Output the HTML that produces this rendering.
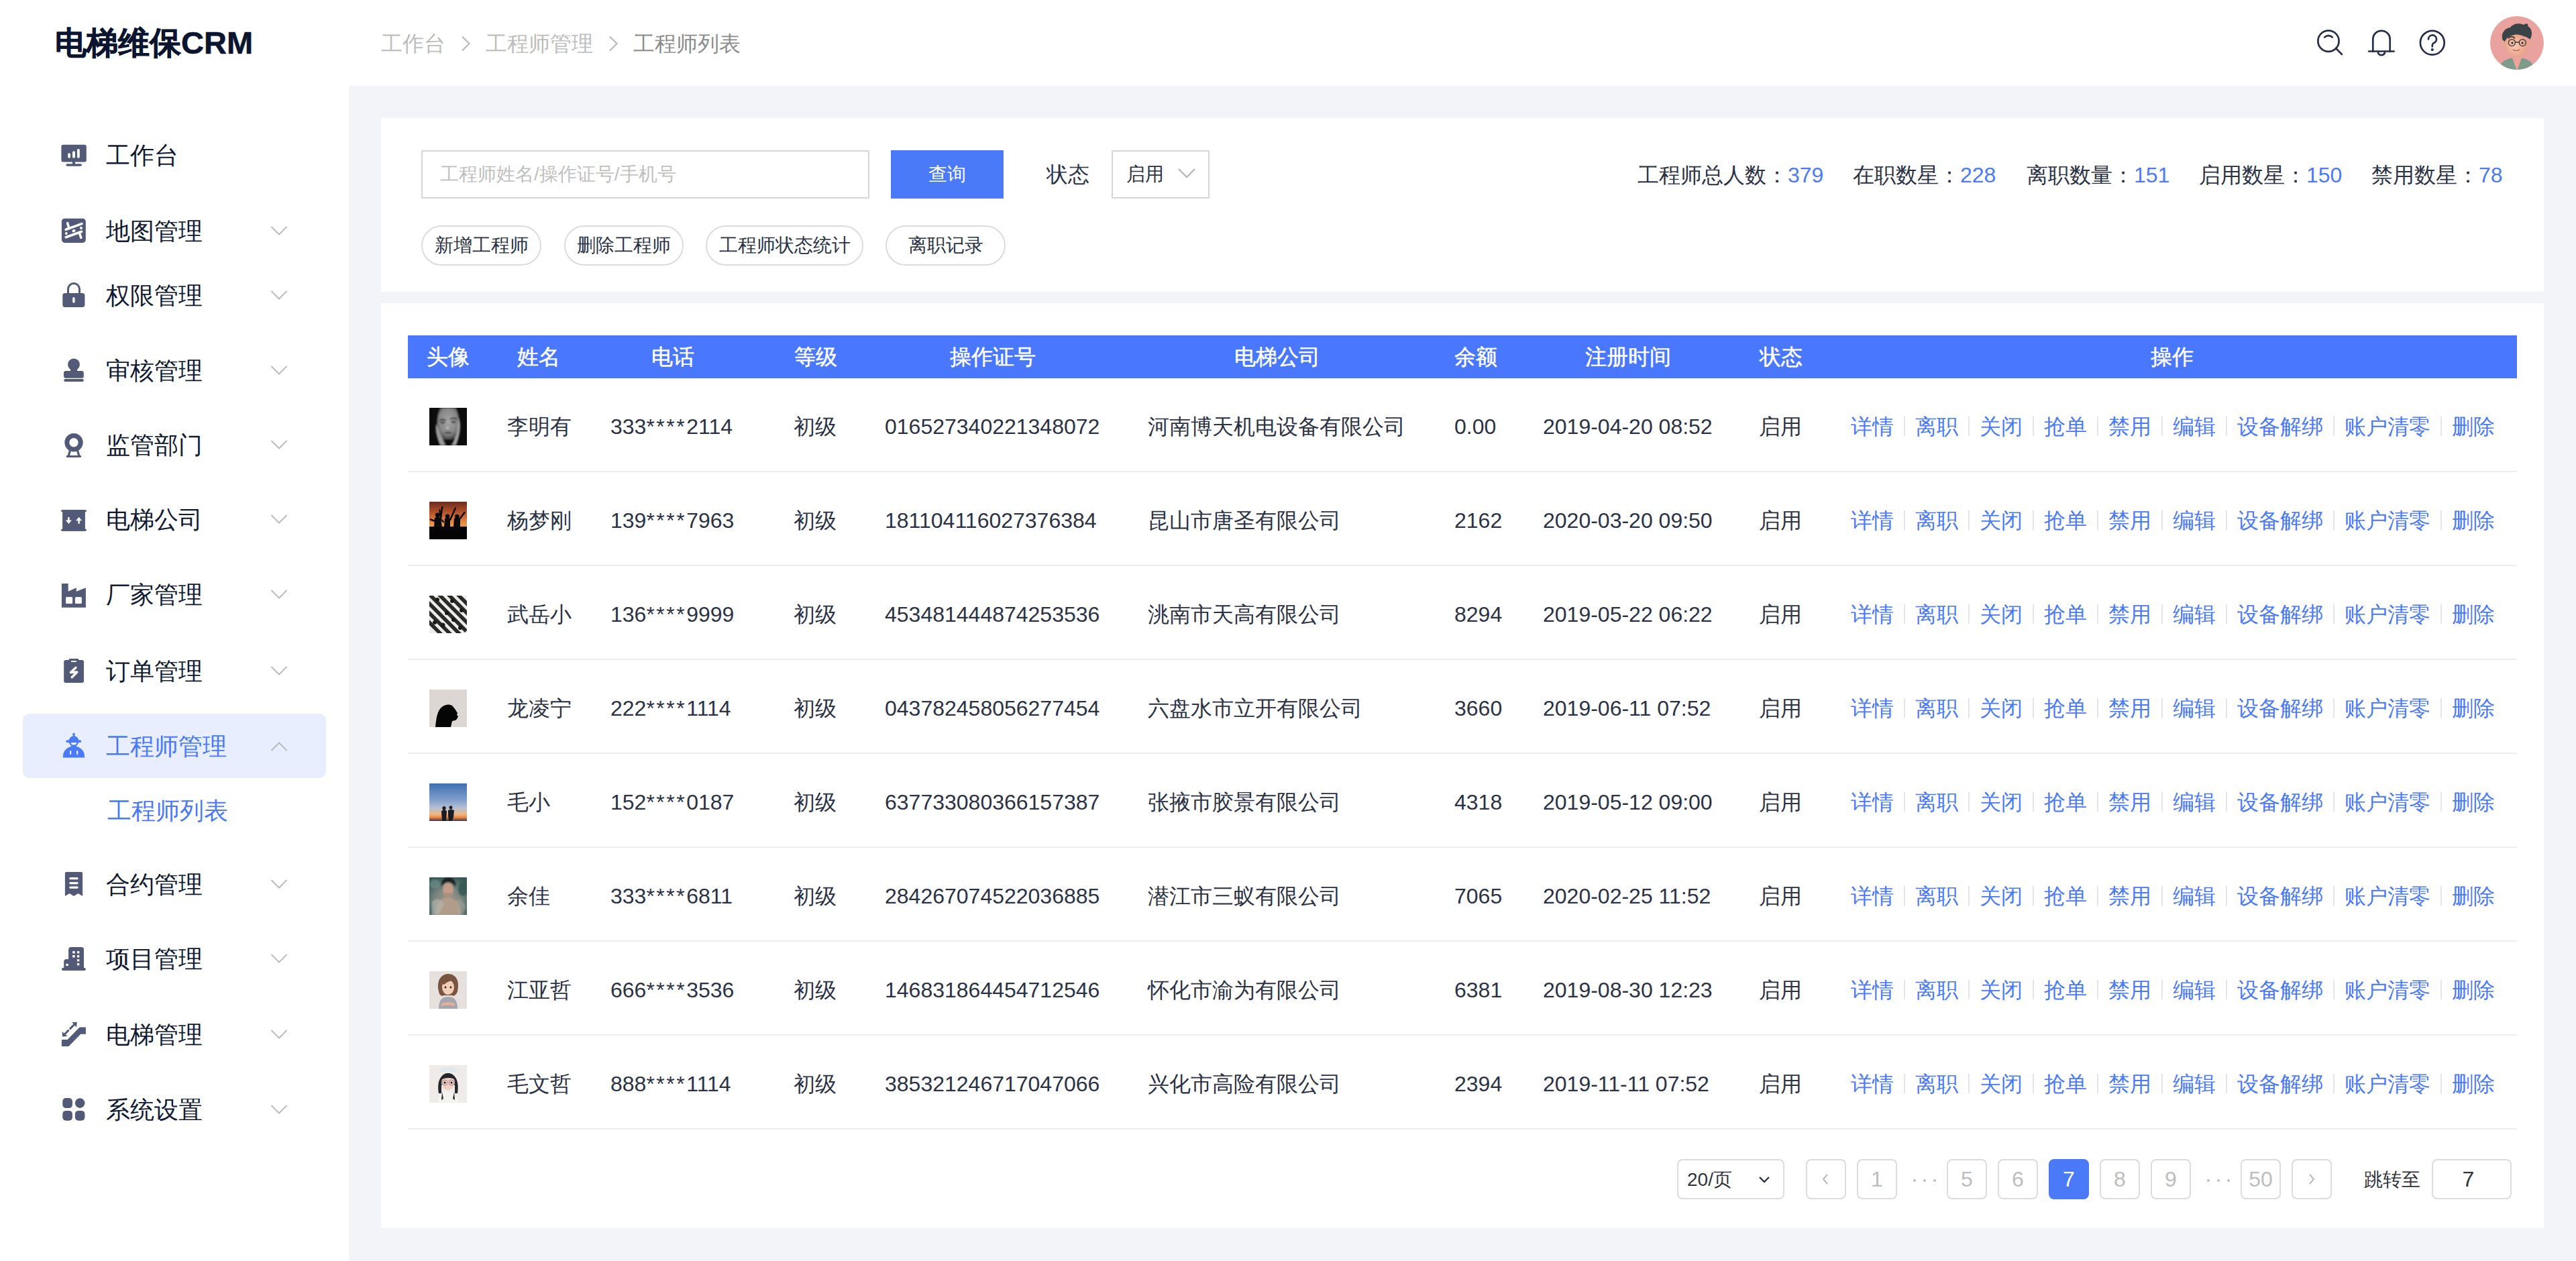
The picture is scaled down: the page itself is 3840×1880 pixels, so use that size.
<!DOCTYPE html>
<html><head><meta charset="utf-8"><title>电梯维保CRM</title>
<style>
*{box-sizing:border-box;margin:0;padding:0}
html,body{width:3840px;height:1880px;overflow:hidden;background:#fff;font-family:"Liberation Sans",sans-serif;color:#2b3245}
.abs{position:absolute;white-space:nowrap}
svg.abs{display:block}
#logo{position:absolute;left:82px;top:31px;font-size:47px;font-weight:bold;color:#0b1530;-webkit-text-stroke:0.6px #0b1530;line-height:66px;white-space:nowrap}
.crumb{font-size:32px;line-height:48px}
.mt{font-size:36px;line-height:60px;white-space:nowrap}
.t28{font-size:28px;line-height:44px}
.t32{font-size:32px;line-height:48px}
.box{border:2px solid #d6d6d6;background:#fff}
.tag{height:60px;border:2px solid #dcdcdc;border-radius:30px;font-size:28px;line-height:56px;text-align:center;color:#2b3245}
.th{height:64px;line-height:64px;font-size:32px;color:#fff;text-align:center;-webkit-text-stroke:0.5px #fff}
.td{font-size:32px;line-height:48px;color:#2b3245}
.op{color:#4a7af8}
.ast{letter-spacing:2.5px}
.av{width:56px;height:56px}
.pbox{border:2px solid #dcdcdc;border-radius:8px;background:#fff}
.pbtn{width:60px;height:60px;border:2px solid #dcdcdc;border-radius:8px;font-size:32px;line-height:56px;text-align:center;color:#bdbdbd;background:#fff}
.av0{background:radial-gradient(ellipse 40% 55% at 50% 50%,#a8a8a8 0%,#7a7a7a 45%,#2a2a2a 80%,#0c0c0c 100%)}
.av1{background:linear-gradient(180deg,#6e2d1c 0%,#c85a2a 35%,#f39a4a 62%,#f2a050 66%,#050505 67%,#000 100%)}
.av2{background:repeating-linear-gradient(45deg,#f0f0ee 0 5px,#2b2b2b 5px 10px)}
.av3{background:#dcd6d3}
.av4{background:linear-gradient(180deg,#3f74b4 0%,#7b9dcc 40%,#b9c3d6 62%,#e9b98a 82%,#f08a40 90%,#4a3a50 100%)}
.av5{background:radial-gradient(ellipse 35% 45% at 55% 55%,#b89a86 0%,#8b8070 50%,#3e6762 85%,#2c4e4c 100%)}
.av6{background:radial-gradient(ellipse 30% 40% at 50% 40%,#6b4a3a 0%,#8c6a58 60%,#e8e2de 100%)}
.av7{background:radial-gradient(ellipse 30% 45% at 50% 40%,#2a2a2a 0%,#6a6a6a 60%,#efeae6 100%)}
</style></head><body>
<div class="abs" style="left:520px;top:128px;width:3320px;height:1752px;background:#f2f4f9"></div>
<div class="abs" style="left:568px;top:176px;width:3224px;height:259px;background:#fff"></div>
<div class="abs" style="left:568px;top:452px;width:3224px;height:1379px;background:#fff"></div>
<div id="logo">电梯维保CRM</div><div class="abs crumb" style="left:568px;top:41px;color:#bdbdbd">工作台</div><svg class="abs" style="left:680px;top:50px" width="30" height="30" viewBox="0 0 30 30" ><path d="M9 4.5 L19.5 15 L9 25.5" stroke="#bdbdbd" stroke-width="2.4" fill="none"/></svg><div class="abs crumb" style="left:724px;top:41px;color:#bdbdbd">工程师管理</div><svg class="abs" style="left:900px;top:50px" width="30" height="30" viewBox="0 0 30 30" ><path d="M9 4.5 L19.5 15 L9 25.5" stroke="#bdbdbd" stroke-width="2.4" fill="none"/></svg><div class="abs crumb" style="left:944px;top:41px;color:#8c8c8c">工程师列表</div><svg class="abs" style="left:3440px;top:30px" width="220" height="70" viewBox="0 0 220 70" ><g stroke="#262e48" stroke-width="2.7" fill="none" stroke-linecap="round">
<circle cx="31" cy="31.2" r="15.6"/>
<path d="M25.2 25.4 a8.5 8.5 0 0 1 11.6 0"/>
<path d="M42 42 L51 51"/>
<path d="M97.3 47 V28.5 a12.7 12.7 0 0 1 25.4 0 V47" />
<path d="M91.2 46.5 H128.6"/>
<path d="M104.8 47 a5.2 5.2 0 0 0 10.4 0"/>
<circle cx="185.8" cy="33.7" r="17.9"/>
<path d="M180 28.5 a6 6 0 1 1 8.4 5.4 c-1.6 0.8 -2.6 2 -2.6 3.8 V39.5"/>
</g><circle cx="185.8" cy="44" r="2.1" fill="#262e48"/></svg><svg class="abs" style="left:3712px;top:24px" width="80" height="80" viewBox="0 0 80 80" ><defs><clipPath id="cb"><circle cx="40" cy="40" r="40"/></clipPath>
<radialGradient id="skin" cx="0.45" cy="0.5" r="0.6"><stop offset="0" stop-color="#f8c9ae"/><stop offset="1" stop-color="#e79c86"/></radialGradient></defs>
<g clip-path="url(#cb)">
<rect width="80" height="80" fill="#e9a29e"/>
<path d="M12 82 C14 68 24 62 40 62 C56 62 64 68 68 82Z" fill="#7d9c8c"/>
<path d="M33 62 L40 82 L47 62Z" fill="#eea498"/>
<ellipse cx="21" cy="42" rx="3" ry="4" fill="#eaa58e"/>
<ellipse cx="57" cy="42" rx="3" ry="4" fill="#eaa58e"/>
<ellipse cx="39" cy="44" rx="16.5" ry="17" fill="url(#skin)"/>
<path d="M19 36 C15 26 22 18 30 17 C34 11 44 10 50 13 C54 10 58 11 56 15 C62 18 64 26 60 34 C60 36 56 31 50 30 C46 28 40 27 36 28 C30 29 24 32 22 38Z" fill="#3a4446"/>
<path d="M27 33 C30 30 34 30 37 33" stroke="#3a2e2a" stroke-width="2" fill="none"/>
<circle cx="32.4" cy="39.6" r="5" stroke="#3a3a3a" stroke-width="1.3" fill="none"/>
<circle cx="48.3" cy="39.6" r="5" stroke="#3a3a3a" stroke-width="1.3" fill="none"/>
<path d="M37.4 39 H43.3" stroke="#3a3a3a" stroke-width="1.3"/>
<circle cx="33" cy="40" r="1.5" fill="#222"/><circle cx="48" cy="40" r="1.5" fill="#222"/>
<path d="M34 50 Q39 53 44 50" stroke="#b55a50" stroke-width="1.2" fill="none"/>
</g></svg>
<div class="abs" style="left:34px;top:1064px;width:452px;height:96px;border-radius:10px;background:#e8eefd"></div><svg class="abs" style="left:80px;top:200px" width="60" height="60" viewBox="0 0 60 60" ><rect x="11.4" y="15.7" width="37.4" height="25.7" rx="2.6" fill="#525a78"/>
<rect x="28" y="40" width="4" height="5" fill="#525a78"/>
<rect x="18.3" y="44.2" width="23.6" height="3.6" rx="1.8" fill="#525a78"/>
<rect x="21.2" y="28.3" width="3.8" height="7.4" rx="1.9" fill="#fff"/>
<rect x="28" y="25.2" width="4" height="10.5" rx="2" fill="#fff"/>
<rect x="35" y="21.9" width="3.8" height="13.8" rx="1.9" fill="#fff"/></svg><div class="abs mt" style="left:158px;top:202.0px;color:#111a33">工作台</div><svg class="abs" style="left:80px;top:310px" width="60" height="60" viewBox="0 0 60 60" ><rect x="11.9" y="15.7" width="35.9" height="36.2" rx="4.5" fill="#525a78"/>
<g stroke="#fff" stroke-width="3.6" stroke-linecap="round" fill="none">
<path d="M18.2 32.3 L41.9 23.6"/><path d="M20.6 22.6 L22.4 28.4"/>
<path d="M18.2 43.7 L41.6 35.3"/><path d="M38.6 38.2 L40.8 44.4"/></g>
<circle cx="18.8" cy="38" r="2" fill="#fff"/><ellipse cx="30" cy="34.2" rx="2.7" ry="2" transform="rotate(-20 30 34.2)" fill="#fff"/><circle cx="41" cy="30" r="2" fill="#fff"/></svg><div class="abs mt" style="left:158px;top:314.5px;color:#111a33">地图管理</div><svg class="abs" style="left:400px;top:332px" width="32" height="24" viewBox="0 0 32 24" ><path d="M4.5 6 L16 17.5 L27.5 6" stroke="#bcbcbc" stroke-width="2" fill="none"/></svg><svg class="abs" style="left:80px;top:410px" width="60" height="60" viewBox="0 0 60 60" ><path d="M21.5 28 V21 a8.5 8.5 0 0 1 17 0 V28" stroke="#525a78" stroke-width="3" fill="none"/>
<rect x="13.3" y="27.1" width="33.1" height="20.8" rx="3.6" fill="#525a78"/>
<rect x="28.2" y="33" width="3.4" height="8.8" rx="1.7" fill="#fff"/></svg><div class="abs mt" style="left:158px;top:410.5px;color:#111a33">权限管理</div><svg class="abs" style="left:400px;top:428px" width="32" height="24" viewBox="0 0 32 24" ><path d="M4.5 6 L16 17.5 L27.5 6" stroke="#bcbcbc" stroke-width="2" fill="none"/></svg><svg class="abs" style="left:80px;top:522px" width="60" height="60" viewBox="0 0 60 60" ><circle cx="30" cy="21.4" r="8.9" fill="#525a78"/>
<rect x="25" y="26" width="10" height="7" fill="#525a78"/>
<rect x="15" y="31" width="29.8" height="10.7" rx="3" fill="#525a78"/>
<rect x="15.2" y="43" width="29.6" height="3.9" rx="1.9" fill="#525a78"/></svg><div class="abs mt" style="left:158px;top:522.8px;color:#111a33">审核管理</div><svg class="abs" style="left:400px;top:540px" width="32" height="24" viewBox="0 0 32 24" ><path d="M4.5 6 L16 17.5 L27.5 6" stroke="#bcbcbc" stroke-width="2" fill="none"/></svg><svg class="abs" style="left:80px;top:634px" width="60" height="60" viewBox="0 0 60 60" ><circle cx="30" cy="25.7" r="10.2" stroke="#525a78" stroke-width="7" fill="none"/>
<path d="M24.6 37 L22.2 45.5 M35.4 37 L37.8 45.5" stroke="#525a78" stroke-width="3.2"/>
<rect x="18.6" y="45" width="22.6" height="2.9" rx="1.4" fill="#525a78"/></svg><div class="abs mt" style="left:158px;top:634.0px;color:#111a33">监管部门</div><svg class="abs" style="left:400px;top:651px" width="32" height="24" viewBox="0 0 32 24" ><path d="M4.5 6 L16 17.5 L27.5 6" stroke="#bcbcbc" stroke-width="2" fill="none"/></svg><svg class="abs" style="left:80px;top:745px" width="60" height="60" viewBox="0 0 60 60" ><rect x="13.1" y="15.2" width="33.8" height="31.5" fill="#525a78"/>
<rect x="11" y="15.2" width="38" height="2.9" rx="1.4" fill="#525a78"/>
<rect x="11" y="43.8" width="38" height="2.9" rx="1.4" fill="#525a78"/>
<path d="M21.2 26 h2.4 v4.5 h3.3 l-4.5 5.5 l-4.5 -5.5 h3.3z" fill="#fff"/>
<path d="M36.4 35.7 h2.4 v-4.5 h3.3 l-4.5 -5.5 l-4.5 5.5 h3.3z" fill="#fff"/></svg><div class="abs mt" style="left:158px;top:745.0px;color:#111a33">电梯公司</div><svg class="abs" style="left:400px;top:762px" width="32" height="24" viewBox="0 0 32 24" ><path d="M4.5 6 L16 17.5 L27.5 6" stroke="#bcbcbc" stroke-width="2" fill="none"/></svg><svg class="abs" style="left:80px;top:857px" width="60" height="60" viewBox="0 0 60 60" ><path d="M11.9 12.9 H21.7 V24.8 L33.8 19.3 V24.8 L47.9 19.3 V48.8 H11.9 Z" fill="#525a78"/>
<rect x="18.1" y="32.9" width="10" height="10" rx="1.5" fill="#fff"/>
<rect x="31.9" y="32.9" width="10" height="10" rx="1.5" fill="#fff"/></svg><div class="abs mt" style="left:158px;top:857.0px;color:#111a33">厂家管理</div><svg class="abs" style="left:400px;top:874px" width="32" height="24" viewBox="0 0 32 24" ><path d="M4.5 6 L16 17.5 L27.5 6" stroke="#bcbcbc" stroke-width="2" fill="none"/></svg><svg class="abs" style="left:80px;top:970px" width="60" height="60" viewBox="0 0 60 60" ><rect x="15.2" y="14" width="29.8" height="33.9" rx="2.8" fill="#525a78"/>
<rect x="22.9" y="11.9" width="14.2" height="3" rx="1" fill="#525a78"/>
<rect x="26" y="15.2" width="8" height="1.8" fill="#fff"/>
<path d="M32.9 25.4 L25.4 32.6 L34.8 32 L27.2 39.8" stroke="#fff" stroke-width="3.4" stroke-linecap="round" stroke-linejoin="round" fill="none"/></svg><div class="abs mt" style="left:158px;top:970.5px;color:#111a33">订单管理</div><svg class="abs" style="left:400px;top:988px" width="32" height="24" viewBox="0 0 32 24" ><path d="M4.5 6 L16 17.5 L27.5 6" stroke="#bcbcbc" stroke-width="2" fill="none"/></svg><svg class="abs" style="left:80px;top:1082px" width="60" height="60" viewBox="0 0 60 60" ><path d="M22.3 23.3 a7.7 8 0 0 1 15.4 0 Z" fill="#4a7af8"/>
<circle cx="30" cy="12.6" r="1.8" fill="#4a7af8"/>
<rect x="28.7" y="12.6" width="2.6" height="3.5" fill="#4a7af8"/>
<rect x="18.3" y="21.6" width="22.9" height="3.4" rx="1.7" fill="#4a7af8"/>
<path d="M22.6 24.5 a7.6 7.6 0 0 0 14.8 0 Z" fill="#4a7af8"/>
<path d="M25.8 25.2 h8.4 a4.2 3.2 0 0 1 -8.4 0z" fill="#fff"/>
<path d="M14 47.4 V45 a16 14.5 0 0 1 32 0 V47.4 Z" fill="#4a7af8"/>
<rect x="26" y="29.2" width="8" height="2.6" fill="#4a7af8"/>
<rect x="24.2" y="37" width="2" height="6" rx="1" fill="#fff"/>
<rect x="34.2" y="37" width="2" height="6" rx="1" fill="#fff"/></svg><div class="abs mt" style="left:158px;top:1082.8px;color:#4a7af8">工程师管理</div><svg class="abs" style="left:400px;top:1101px" width="32" height="24" viewBox="0 0 32 24" ><path d="M4.5 18 L16 6.5 L27.5 18" stroke="#bcbcbc" stroke-width="2" fill="none"/></svg><svg class="abs" style="left:80px;top:1288px" width="60" height="60" viewBox="0 0 60 60" ><path d="M16.9 13.9 a2 2 0 0 1 2 -2 H41.1 a2 2 0 0 1 2 2 V47.9 L36.4 44 L30 47.9 L23.6 44 L16.9 47.9 Z" fill="#525a78"/>
<rect x="23.3" y="20" width="13.4" height="3.3" rx="1.6" fill="#fff"/>
<rect x="23.3" y="26.9" width="13.4" height="3.3" rx="1.6" fill="#fff"/>
<rect x="23.3" y="33.4" width="13.4" height="3.4" rx="1.6" fill="#fff"/></svg><div class="abs mt" style="left:158px;top:1288.5px;color:#111a33">合约管理</div><svg class="abs" style="left:400px;top:1306px" width="32" height="24" viewBox="0 0 32 24" ><path d="M4.5 6 L16 17.5 L27.5 6" stroke="#bcbcbc" stroke-width="2" fill="none"/></svg><svg class="abs" style="left:80px;top:1400px" width="60" height="60" viewBox="0 0 60 60" ><path d="M22.1 16 a4 4 0 0 1 4 -4 H41 a4 4 0 0 1 4 4 V45 H22.1Z" fill="#525a78"/>
<path d="M15.2 34 a4 4 0 0 1 4 -4 H23 V45 H15.2Z" fill="#525a78"/>
<rect x="11.9" y="43.1" width="36" height="3.8" rx="1.9" fill="#525a78"/>
<g fill="#fff"><rect x="28.1" y="18.1" width="3.6" height="3.3"/><rect x="35" y="18.1" width="3.3" height="3.3"/>
<rect x="28.1" y="24" width="3.6" height="3.4"/><rect x="35" y="24" width="3.3" height="3.4"/>
<rect x="35" y="30" width="3.3" height="3.3"/><rect x="35" y="36" width="3.3" height="3.3"/>
<rect x="18.3" y="36.9" width="3.6" height="3.1"/></g></svg><div class="abs mt" style="left:158px;top:1400.0px;color:#111a33">项目管理</div><svg class="abs" style="left:400px;top:1417px" width="32" height="24" viewBox="0 0 32 24" ><path d="M4.5 6 L16 17.5 L27.5 6" stroke="#bcbcbc" stroke-width="2" fill="none"/></svg><svg class="abs" style="left:80px;top:1512px" width="60" height="60" viewBox="0 0 60 60" ><path d="M11.9 38.1 H20.5 L38.6 19.5 H47.9 V29.8 H40.2 L22.4 47.9 H11.9 Z" fill="#525a78"/>
<path d="M24.8 21.4 L31.5 14.7 M21.9 24.3 L15.5 30.7" stroke="#525a78" stroke-width="3" stroke-linecap="round"/>
<path d="M27.1 12.1 L34.8 11.7 L34 19.5 Z" fill="#525a78"/>
<path d="M12.6 26 L12.9 33.6 L20.5 32.9 Z" fill="#525a78"/></svg><div class="abs mt" style="left:158px;top:1512.7px;color:#111a33">电梯管理</div><svg class="abs" style="left:400px;top:1530px" width="32" height="24" viewBox="0 0 32 24" ><path d="M4.5 6 L16 17.5 L27.5 6" stroke="#bcbcbc" stroke-width="2" fill="none"/></svg><svg class="abs" style="left:80px;top:1624px" width="60" height="60" viewBox="0 0 60 60" ><rect x="13.3" y="13.1" width="14.6" height="15" rx="5" fill="#525a78"/>
<circle cx="39.15" cy="20.6" r="7.3" fill="#525a78"/>
<rect x="13.3" y="31.9" width="14.6" height="14.8" rx="5" fill="#525a78"/>
<rect x="31.9" y="31.9" width="14.5" height="14.8" rx="5" fill="#525a78"/></svg><div class="abs mt" style="left:158px;top:1624.5px;color:#111a33">系统设置</div><svg class="abs" style="left:400px;top:1642px" width="32" height="24" viewBox="0 0 32 24" ><path d="M4.5 6 L16 17.5 L27.5 6" stroke="#bcbcbc" stroke-width="2" fill="none"/></svg><div class="abs mt" style="left:160px;top:1179px;color:#4a7af8">工程师列表</div>
<div class="abs box" style="left:628px;top:224px;width:668px;height:72px"></div><div class="abs t28" style="left:656px;top:238px;color:#bfbfbf">工程师姓名/操作证号/手机号</div><div class="abs" style="left:1328px;top:224px;width:168px;height:72px;background:#4a7af8"></div><div class="abs t28" style="left:1384px;top:238px;color:#fff">查询</div><div class="abs t32" style="left:1560px;top:236px;color:#2b3245">状态</div><div class="abs box" style="left:1657px;top:224px;width:146px;height:72px"></div><div class="abs t28" style="left:1679px;top:238px;color:#2b3245">启用</div><svg class="abs" style="left:1752px;top:244px" width="34" height="30" viewBox="0 0 34 30" ><path d="M5 8 L17 20 L29 8" stroke="#b9b9b9" stroke-width="2.4" fill="none"/></svg><div class="abs tag" style="left:628px;top:336px;width:179px">新增工程师</div><div class="abs tag" style="left:841px;top:336px;width:178px">删除工程师</div><div class="abs tag" style="left:1052px;top:336px;width:235px">工程师状态统计</div><div class="abs tag" style="left:1320px;top:336px;width:179px">离职记录</div><div class="abs t32" style="left:2441px;top:237px;color:#2b3245">工程师总人数：<span style="color:#4a7af8">379</span></div><div class="abs t32" style="left:2762px;top:237px;color:#2b3245">在职数星：<span style="color:#4a7af8">228</span></div><div class="abs t32" style="left:3021px;top:237px;color:#2b3245">离职数量：<span style="color:#4a7af8">151</span></div><div class="abs t32" style="left:3278px;top:237px;color:#2b3245">启用数星：<span style="color:#4a7af8">150</span></div><div class="abs t32" style="left:3535px;top:237px;color:#2b3245">禁用数星：<span style="color:#4a7af8">78</span></div>
<div class="abs" style="left:608px;top:500px;width:3144px;height:64px;background:#4977fe"></div><div class="abs th" style="left:467.5px;top:500px;width:400px">头像</div><div class="abs th" style="left:602.8px;top:500px;width:400px">姓名</div><div class="abs th" style="left:802.5px;top:500px;width:400px">电话</div><div class="abs th" style="left:1015.5px;top:500px;width:400px">等级</div><div class="abs th" style="left:1279.5px;top:500px;width:400px">操作证号</div><div class="abs th" style="left:1704.0px;top:500px;width:400px">电梯公司</div><div class="abs th" style="left:2000.0px;top:500px;width:400px">余额</div><div class="abs th" style="left:2227.0px;top:500px;width:400px">注册时间</div><div class="abs th" style="left:2454.5px;top:500px;width:400px">状态</div><div class="abs th" style="left:3037.7px;top:500px;width:400px">操作</div><div class="abs" style="left:608px;top:702px;width:3144px;height:2px;background:#ebedf2"></div><svg class="abs" style="left:640px;top:608px" width="56" height="56" viewBox="0 0 56 56" ><defs><radialGradient id="a0f" cx="0.5" cy="0.42" r="0.55"><stop offset="0" stop-color="#a6a6a6"/><stop offset="0.75" stop-color="#858585"/><stop offset="1" stop-color="#4a4a4a"/></radialGradient>
<filter id="a0b"><feGaussianBlur stdDeviation="0.8"/></filter></defs>
<rect width="56" height="56" fill="#0c0c0c"/>
<g filter="url(#a0b)">
<path d="M16 0 H40 C44 8 46 20 44 34 C42 44 36 48 28 48 C20 48 14 44 12 34 C10 20 12 8 16 0Z" fill="url(#a0f)"/>
<path d="M10 24 C8 34 12 46 16 56 H24 C22 48 16 40 14 32Z" fill="#9a9a9a"/>
<path d="M44 14 C48 26 46 40 40 56 H33 C38 46 42 36 42 26Z" fill="#9e9e9e"/>
<path d="M15 19 Q20 16 25 19 M31 17 Q37 14 41 17" stroke="#2a2a2a" stroke-width="1.8" fill="none"/>
<ellipse cx="20" cy="22" rx="3.5" ry="1.5" fill="#3a3a3a"/><ellipse cx="36" cy="21" rx="3.5" ry="1.5" fill="#3a3a3a"/>
<ellipse cx="27" cy="30" rx="2" ry="1.4" fill="#c8c8c8"/>
<path d="M21 37 Q28 34 35 37 Q28 41 21 37Z" fill="#505050"/>
<rect x="24" y="47" width="8" height="9" fill="#111"/>
</g></svg><div class="abs td" style="left:756px;top:612px">李明有</div><div class="abs td" style="left:910px;top:612px">333<span class="ast">****</span>2114</div><div class="abs td" style="left:1183px;top:612px">初级</div><div class="abs td" style="left:1319px;top:612px">016527340221348072</div><div class="abs td" style="left:1711px;top:612px">河南博天机电设备有限公司</div><div class="abs td" style="left:2168px;top:612px">0.00</div><div class="abs td" style="left:2300px;top:612px">2019-04-20 08:52</div><div class="abs td" style="left:2622px;top:612px">启用</div><div class="abs td op" style="left:2759px;top:612px">详情</div><div class="abs" style="left:2838px;top:621px;width:2px;height:29px;background:#e3e5ea"></div><div class="abs td op" style="left:2855px;top:612px">离职</div><div class="abs" style="left:2934px;top:621px;width:2px;height:29px;background:#e3e5ea"></div><div class="abs td op" style="left:2951px;top:612px">关闭</div><div class="abs" style="left:3030px;top:621px;width:2px;height:29px;background:#e3e5ea"></div><div class="abs td op" style="left:3047px;top:612px">抢单</div><div class="abs" style="left:3126px;top:621px;width:2px;height:29px;background:#e3e5ea"></div><div class="abs td op" style="left:3143px;top:612px">禁用</div><div class="abs" style="left:3222px;top:621px;width:2px;height:29px;background:#e3e5ea"></div><div class="abs td op" style="left:3239px;top:612px">编辑</div><div class="abs" style="left:3318px;top:621px;width:2px;height:29px;background:#e3e5ea"></div><div class="abs td op" style="left:3335px;top:612px">设备解绑</div><div class="abs" style="left:3478px;top:621px;width:2px;height:29px;background:#e3e5ea"></div><div class="abs td op" style="left:3495px;top:612px">账户清零</div><div class="abs" style="left:3638px;top:621px;width:2px;height:29px;background:#e3e5ea"></div><div class="abs td op" style="left:3655px;top:612px">删除</div><div class="abs" style="left:608px;top:842px;width:3144px;height:2px;background:#ebedf2"></div><svg class="abs" style="left:640px;top:748px" width="56" height="56" viewBox="0 0 56 56" ><defs><linearGradient id="a1g" x1="0" y1="0" x2="0" y2="1"><stop offset="0" stop-color="#6a2a1c"/><stop offset="0.3" stop-color="#b9542c"/><stop offset="0.66" stop-color="#f5a050"/></linearGradient></defs>
<rect width="56" height="56" fill="url(#a1g)"/>
<rect y="37" width="56" height="19" fill="#040404"/>
<g fill="#0a0a0a"><circle cx="12.2" cy="20" r="3.4"/><circle cx="27.1" cy="21.8" r="3.3"/><circle cx="41.4" cy="22" r="3.3"/>
<path d="M8 24 Q12 22 17 24 L19 38 H7Z"/><path d="M23 25 Q27 23 31 25 L31 38 H22Z"/><path d="M37 25 Q41 23 46 25 L46 38 H36Z"/></g>
<g stroke="#0a0a0a" stroke-width="2.4" stroke-linecap="round" fill="none">
<path d="M17 25 L19.2 8"/><path d="M17 25 L15.4 12.4"/><path d="M9 29 L1.8 26.5"/>
<path d="M31 27 L38.9 9.5"/><path d="M45 26 L52.5 16"/><path d="M21 30 L17 26"/></g></svg><div class="abs td" style="left:756px;top:752px">杨梦刚</div><div class="abs td" style="left:910px;top:752px">139<span class="ast">****</span>7963</div><div class="abs td" style="left:1183px;top:752px">初级</div><div class="abs td" style="left:1319px;top:752px">181104116027376384</div><div class="abs td" style="left:1711px;top:752px">昆山市唐圣有限公司</div><div class="abs td" style="left:2168px;top:752px">2162</div><div class="abs td" style="left:2300px;top:752px">2020-03-20 09:50</div><div class="abs td" style="left:2622px;top:752px">启用</div><div class="abs td op" style="left:2759px;top:752px">详情</div><div class="abs" style="left:2838px;top:761px;width:2px;height:29px;background:#e3e5ea"></div><div class="abs td op" style="left:2855px;top:752px">离职</div><div class="abs" style="left:2934px;top:761px;width:2px;height:29px;background:#e3e5ea"></div><div class="abs td op" style="left:2951px;top:752px">关闭</div><div class="abs" style="left:3030px;top:761px;width:2px;height:29px;background:#e3e5ea"></div><div class="abs td op" style="left:3047px;top:752px">抢单</div><div class="abs" style="left:3126px;top:761px;width:2px;height:29px;background:#e3e5ea"></div><div class="abs td op" style="left:3143px;top:752px">禁用</div><div class="abs" style="left:3222px;top:761px;width:2px;height:29px;background:#e3e5ea"></div><div class="abs td op" style="left:3239px;top:752px">编辑</div><div class="abs" style="left:3318px;top:761px;width:2px;height:29px;background:#e3e5ea"></div><div class="abs td op" style="left:3335px;top:752px">设备解绑</div><div class="abs" style="left:3478px;top:761px;width:2px;height:29px;background:#e3e5ea"></div><div class="abs td op" style="left:3495px;top:752px">账户清零</div><div class="abs" style="left:3638px;top:761px;width:2px;height:29px;background:#e3e5ea"></div><div class="abs td op" style="left:3655px;top:752px">删除</div><div class="abs" style="left:608px;top:982px;width:3144px;height:2px;background:#ebedf2"></div><svg class="abs" style="left:640px;top:888px" width="56" height="56" viewBox="0 0 56 56" ><rect width="56" height="56" fill="#ecece8"/>
<g stroke="#2a2a2a" stroke-width="5.5">
<path d="M-20 -8 L48 60 M-13 -15 L55 53 M-6 -22 L62 46 M1 -29 L69 39 M-27 -1 L41 67 M-34 6 L34 74 M8 -36 L76 32"/>
</g>
<g fill="#1a1a1a"><circle cx="12" cy="6" r="3"/><circle cx="34" cy="8" r="3"/><circle cx="48" cy="22" r="3"/><circle cx="26" cy="26" r="3"/><circle cx="36" cy="36" r="3"/><circle cx="20" cy="44" r="3.5"/><circle cx="46" cy="48" r="3"/><circle cx="8" cy="40" r="3"/></g></svg><div class="abs td" style="left:756px;top:892px">武岳小</div><div class="abs td" style="left:910px;top:892px">136<span class="ast">****</span>9999</div><div class="abs td" style="left:1183px;top:892px">初级</div><div class="abs td" style="left:1319px;top:892px">453481444874253536</div><div class="abs td" style="left:1711px;top:892px">洮南市天高有限公司</div><div class="abs td" style="left:2168px;top:892px">8294</div><div class="abs td" style="left:2300px;top:892px">2019-05-22 06:22</div><div class="abs td" style="left:2622px;top:892px">启用</div><div class="abs td op" style="left:2759px;top:892px">详情</div><div class="abs" style="left:2838px;top:901px;width:2px;height:29px;background:#e3e5ea"></div><div class="abs td op" style="left:2855px;top:892px">离职</div><div class="abs" style="left:2934px;top:901px;width:2px;height:29px;background:#e3e5ea"></div><div class="abs td op" style="left:2951px;top:892px">关闭</div><div class="abs" style="left:3030px;top:901px;width:2px;height:29px;background:#e3e5ea"></div><div class="abs td op" style="left:3047px;top:892px">抢单</div><div class="abs" style="left:3126px;top:901px;width:2px;height:29px;background:#e3e5ea"></div><div class="abs td op" style="left:3143px;top:892px">禁用</div><div class="abs" style="left:3222px;top:901px;width:2px;height:29px;background:#e3e5ea"></div><div class="abs td op" style="left:3239px;top:892px">编辑</div><div class="abs" style="left:3318px;top:901px;width:2px;height:29px;background:#e3e5ea"></div><div class="abs td op" style="left:3335px;top:892px">设备解绑</div><div class="abs" style="left:3478px;top:901px;width:2px;height:29px;background:#e3e5ea"></div><div class="abs td op" style="left:3495px;top:892px">账户清零</div><div class="abs" style="left:3638px;top:901px;width:2px;height:29px;background:#e3e5ea"></div><div class="abs td op" style="left:3655px;top:892px">删除</div><div class="abs" style="left:608px;top:1122px;width:3144px;height:2px;background:#ebedf2"></div><svg class="abs" style="left:640px;top:1028px" width="56" height="56" viewBox="0 0 56 56" ><rect width="56" height="56" fill="#ddd7d4"/>
<path d="M9 56 C10 46 11 38 14 32 C18 24 27 20 34 24 C37 27 39 30 40 32 L42 35 L41 38 L43 40 L41 44 C40 46 37 46 34 47 L32 56Z" fill="#050505"/></svg><div class="abs td" style="left:756px;top:1032px">龙凌宁</div><div class="abs td" style="left:910px;top:1032px">222<span class="ast">****</span>1114</div><div class="abs td" style="left:1183px;top:1032px">初级</div><div class="abs td" style="left:1319px;top:1032px">043782458056277454</div><div class="abs td" style="left:1711px;top:1032px">六盘水市立开有限公司</div><div class="abs td" style="left:2168px;top:1032px">3660</div><div class="abs td" style="left:2300px;top:1032px">2019-06-11 07:52</div><div class="abs td" style="left:2622px;top:1032px">启用</div><div class="abs td op" style="left:2759px;top:1032px">详情</div><div class="abs" style="left:2838px;top:1041px;width:2px;height:29px;background:#e3e5ea"></div><div class="abs td op" style="left:2855px;top:1032px">离职</div><div class="abs" style="left:2934px;top:1041px;width:2px;height:29px;background:#e3e5ea"></div><div class="abs td op" style="left:2951px;top:1032px">关闭</div><div class="abs" style="left:3030px;top:1041px;width:2px;height:29px;background:#e3e5ea"></div><div class="abs td op" style="left:3047px;top:1032px">抢单</div><div class="abs" style="left:3126px;top:1041px;width:2px;height:29px;background:#e3e5ea"></div><div class="abs td op" style="left:3143px;top:1032px">禁用</div><div class="abs" style="left:3222px;top:1041px;width:2px;height:29px;background:#e3e5ea"></div><div class="abs td op" style="left:3239px;top:1032px">编辑</div><div class="abs" style="left:3318px;top:1041px;width:2px;height:29px;background:#e3e5ea"></div><div class="abs td op" style="left:3335px;top:1032px">设备解绑</div><div class="abs" style="left:3478px;top:1041px;width:2px;height:29px;background:#e3e5ea"></div><div class="abs td op" style="left:3495px;top:1032px">账户清零</div><div class="abs" style="left:3638px;top:1041px;width:2px;height:29px;background:#e3e5ea"></div><div class="abs td op" style="left:3655px;top:1032px">删除</div><div class="abs" style="left:608px;top:1262px;width:3144px;height:2px;background:#ebedf2"></div><svg class="abs" style="left:640px;top:1168px" width="56" height="56" viewBox="0 0 56 56" ><defs><linearGradient id="a4g" x1="0" y1="0" x2="0" y2="1"><stop offset="0" stop-color="#3d70b2"/><stop offset="0.45" stop-color="#82a0cb"/><stop offset="0.65" stop-color="#b5c0d3"/><stop offset="0.82" stop-color="#ecb884"/><stop offset="0.9" stop-color="#f08a42"/><stop offset="1" stop-color="#403650"/></linearGradient></defs>
<rect width="56" height="56" fill="url(#a4g)"/>
<g fill="#1a1c24"><ellipse cx="22" cy="37" rx="2.6" ry="3"/><path d="M18 41 Q22 38 26 41 L25 56 H19Z"/>
<ellipse cx="32" cy="36" rx="2.4" ry="2.8"/><path d="M28 40 Q32 38 37 40 L36 50 L34 56 H29 L28 48Z"/></g></svg><div class="abs td" style="left:756px;top:1172px">毛小</div><div class="abs td" style="left:910px;top:1172px">152<span class="ast">****</span>0187</div><div class="abs td" style="left:1183px;top:1172px">初级</div><div class="abs td" style="left:1319px;top:1172px">637733080366157387</div><div class="abs td" style="left:1711px;top:1172px">张掖市胶景有限公司</div><div class="abs td" style="left:2168px;top:1172px">4318</div><div class="abs td" style="left:2300px;top:1172px">2019-05-12 09:00</div><div class="abs td" style="left:2622px;top:1172px">启用</div><div class="abs td op" style="left:2759px;top:1172px">详情</div><div class="abs" style="left:2838px;top:1181px;width:2px;height:29px;background:#e3e5ea"></div><div class="abs td op" style="left:2855px;top:1172px">离职</div><div class="abs" style="left:2934px;top:1181px;width:2px;height:29px;background:#e3e5ea"></div><div class="abs td op" style="left:2951px;top:1172px">关闭</div><div class="abs" style="left:3030px;top:1181px;width:2px;height:29px;background:#e3e5ea"></div><div class="abs td op" style="left:3047px;top:1172px">抢单</div><div class="abs" style="left:3126px;top:1181px;width:2px;height:29px;background:#e3e5ea"></div><div class="abs td op" style="left:3143px;top:1172px">禁用</div><div class="abs" style="left:3222px;top:1181px;width:2px;height:29px;background:#e3e5ea"></div><div class="abs td op" style="left:3239px;top:1172px">编辑</div><div class="abs" style="left:3318px;top:1181px;width:2px;height:29px;background:#e3e5ea"></div><div class="abs td op" style="left:3335px;top:1172px">设备解绑</div><div class="abs" style="left:3478px;top:1181px;width:2px;height:29px;background:#e3e5ea"></div><div class="abs td op" style="left:3495px;top:1172px">账户清零</div><div class="abs" style="left:3638px;top:1181px;width:2px;height:29px;background:#e3e5ea"></div><div class="abs td op" style="left:3655px;top:1172px">删除</div><div class="abs" style="left:608px;top:1402px;width:3144px;height:2px;background:#ebedf2"></div><svg class="abs" style="left:640px;top:1308px" width="56" height="56" viewBox="0 0 56 56" ><defs><radialGradient id="a5g" cx="0.5" cy="0.65" r="0.7"><stop offset="0" stop-color="#a89886"/><stop offset="0.5" stop-color="#7c8780"/><stop offset="1" stop-color="#355a57"/></radialGradient>
<filter id="a5b"><feGaussianBlur stdDeviation="1.2"/></filter></defs>
<rect width="56" height="56" fill="url(#a5g)"/>
<g filter="url(#a5b)">
<ellipse cx="8" cy="10" rx="8" ry="7" fill="#6d8c88" opacity="0.7"/><ellipse cx="50" cy="18" rx="7" ry="10" fill="#2f5551" opacity="0.8"/>
<path d="M9 56 C10 40 16 30 28 30 C40 30 46 40 47 56Z" fill="#b09c88"/>
<path d="M4 36 C10 30 18 32 22 40 L14 56 H4Z" fill="#b8bbb4" opacity="0.6"/>
<path d="M40 34 C46 32 52 36 54 44 L50 56 H44Z" fill="#a9aba4" opacity="0.5"/>
<ellipse cx="28" cy="18" rx="8" ry="10" fill="#c49d8a"/>
<path d="M18 14 C17 4 23 0 28 0 C35 0 40 5 39 14 C36 9 32 7 28 7 C24 7 20 9 18 14Z" fill="#1c2020"/>
<path d="M24 24 Q28 26 32 24" stroke="#8a5a50" stroke-width="1.2" fill="none"/>
</g></svg><div class="abs td" style="left:756px;top:1312px">余佳</div><div class="abs td" style="left:910px;top:1312px">333<span class="ast">****</span>6811</div><div class="abs td" style="left:1183px;top:1312px">初级</div><div class="abs td" style="left:1319px;top:1312px">284267074522036885</div><div class="abs td" style="left:1711px;top:1312px">潜江市三蚁有限公司</div><div class="abs td" style="left:2168px;top:1312px">7065</div><div class="abs td" style="left:2300px;top:1312px">2020-02-25 11:52</div><div class="abs td" style="left:2622px;top:1312px">启用</div><div class="abs td op" style="left:2759px;top:1312px">详情</div><div class="abs" style="left:2838px;top:1321px;width:2px;height:29px;background:#e3e5ea"></div><div class="abs td op" style="left:2855px;top:1312px">离职</div><div class="abs" style="left:2934px;top:1321px;width:2px;height:29px;background:#e3e5ea"></div><div class="abs td op" style="left:2951px;top:1312px">关闭</div><div class="abs" style="left:3030px;top:1321px;width:2px;height:29px;background:#e3e5ea"></div><div class="abs td op" style="left:3047px;top:1312px">抢单</div><div class="abs" style="left:3126px;top:1321px;width:2px;height:29px;background:#e3e5ea"></div><div class="abs td op" style="left:3143px;top:1312px">禁用</div><div class="abs" style="left:3222px;top:1321px;width:2px;height:29px;background:#e3e5ea"></div><div class="abs td op" style="left:3239px;top:1312px">编辑</div><div class="abs" style="left:3318px;top:1321px;width:2px;height:29px;background:#e3e5ea"></div><div class="abs td op" style="left:3335px;top:1312px">设备解绑</div><div class="abs" style="left:3478px;top:1321px;width:2px;height:29px;background:#e3e5ea"></div><div class="abs td op" style="left:3495px;top:1312px">账户清零</div><div class="abs" style="left:3638px;top:1321px;width:2px;height:29px;background:#e3e5ea"></div><div class="abs td op" style="left:3655px;top:1312px">删除</div><div class="abs" style="left:608px;top:1542px;width:3144px;height:2px;background:#ebedf2"></div><svg class="abs" style="left:640px;top:1448px" width="56" height="56" viewBox="0 0 56 56" ><rect width="56" height="56" fill="#e7e1dd"/>
<path d="M14 30 C10 14 18 4 28 4 C38 4 46 12 42 30 C40 36 36 38 34 36 L22 36 C18 38 15 36 14 30Z" fill="#7a5440"/>
<ellipse cx="28" cy="24" rx="9" ry="11" fill="#f3cdb8"/>
<path d="M18 18 C20 10 30 8 38 14 C34 14 28 14 22 20Z" fill="#7a5440"/>
<circle cx="24" cy="24" r="1.4" fill="#2a1a14"/><circle cx="32" cy="24" r="1.4" fill="#2a1a14"/>
<path d="M14 56 C14 44 18 38 28 38 C38 38 42 44 42 56Z" fill="#a6a6ae"/>
<path d="M18 48 C24 46 32 46 38 48 L38 52 C32 50 24 50 18 52Z" fill="#e7b096"/></svg><div class="abs td" style="left:756px;top:1452px">江亚哲</div><div class="abs td" style="left:910px;top:1452px">666<span class="ast">****</span>3536</div><div class="abs td" style="left:1183px;top:1452px">初级</div><div class="abs td" style="left:1319px;top:1452px">146831864454712546</div><div class="abs td" style="left:1711px;top:1452px">怀化市渝为有限公司</div><div class="abs td" style="left:2168px;top:1452px">6381</div><div class="abs td" style="left:2300px;top:1452px">2019-08-30 12:23</div><div class="abs td" style="left:2622px;top:1452px">启用</div><div class="abs td op" style="left:2759px;top:1452px">详情</div><div class="abs" style="left:2838px;top:1461px;width:2px;height:29px;background:#e3e5ea"></div><div class="abs td op" style="left:2855px;top:1452px">离职</div><div class="abs" style="left:2934px;top:1461px;width:2px;height:29px;background:#e3e5ea"></div><div class="abs td op" style="left:2951px;top:1452px">关闭</div><div class="abs" style="left:3030px;top:1461px;width:2px;height:29px;background:#e3e5ea"></div><div class="abs td op" style="left:3047px;top:1452px">抢单</div><div class="abs" style="left:3126px;top:1461px;width:2px;height:29px;background:#e3e5ea"></div><div class="abs td op" style="left:3143px;top:1452px">禁用</div><div class="abs" style="left:3222px;top:1461px;width:2px;height:29px;background:#e3e5ea"></div><div class="abs td op" style="left:3239px;top:1452px">编辑</div><div class="abs" style="left:3318px;top:1461px;width:2px;height:29px;background:#e3e5ea"></div><div class="abs td op" style="left:3335px;top:1452px">设备解绑</div><div class="abs" style="left:3478px;top:1461px;width:2px;height:29px;background:#e3e5ea"></div><div class="abs td op" style="left:3495px;top:1452px">账户清零</div><div class="abs" style="left:3638px;top:1461px;width:2px;height:29px;background:#e3e5ea"></div><div class="abs td op" style="left:3655px;top:1452px">删除</div><div class="abs" style="left:608px;top:1682px;width:3144px;height:2px;background:#ebedf2"></div><svg class="abs" style="left:640px;top:1588px" width="56" height="56" viewBox="0 0 56 56" ><rect width="56" height="56" fill="#efebe8"/>
<path d="M16 6 C18 2 38 2 40 6 L42 10 H14Z" fill="#dfe8ea"/>
<path d="M14 42 C12 30 13 14 28 12 C43 14 44 30 42 42 L38 42 L38 30 L18 30 L18 42Z" fill="#24262a"/>
<ellipse cx="28" cy="26" rx="10" ry="11" fill="#f2cfc2"/>
<path d="M17 22 C18 14 24 12 28 12 C34 12 38 16 39 22 C34 18 24 18 17 22Z" fill="#24262a"/>
<circle cx="23" cy="26" r="4" stroke="#9a8a90" stroke-width="1" fill="none"/><circle cx="33" cy="26" r="4" stroke="#9a8a90" stroke-width="1" fill="none"/>
<circle cx="23" cy="26" r="1.5" fill="#111"/><circle cx="33" cy="26" r="1.5" fill="#111"/>
<path d="M12 56 C14 46 18 40 28 40 C38 40 42 46 44 56Z" fill="#f4f4ee"/>
<path d="M19 40 L21 50 L18 52 Z M37 40 L35 50 L38 52Z" fill="#24262a"/></svg><div class="abs td" style="left:756px;top:1592px">毛文哲</div><div class="abs td" style="left:910px;top:1592px">888<span class="ast">****</span>1114</div><div class="abs td" style="left:1183px;top:1592px">初级</div><div class="abs td" style="left:1319px;top:1592px">385321246717047066</div><div class="abs td" style="left:1711px;top:1592px">兴化市高险有限公司</div><div class="abs td" style="left:2168px;top:1592px">2394</div><div class="abs td" style="left:2300px;top:1592px">2019-11-11 07:52</div><div class="abs td" style="left:2622px;top:1592px">启用</div><div class="abs td op" style="left:2759px;top:1592px">详情</div><div class="abs" style="left:2838px;top:1601px;width:2px;height:29px;background:#e3e5ea"></div><div class="abs td op" style="left:2855px;top:1592px">离职</div><div class="abs" style="left:2934px;top:1601px;width:2px;height:29px;background:#e3e5ea"></div><div class="abs td op" style="left:2951px;top:1592px">关闭</div><div class="abs" style="left:3030px;top:1601px;width:2px;height:29px;background:#e3e5ea"></div><div class="abs td op" style="left:3047px;top:1592px">抢单</div><div class="abs" style="left:3126px;top:1601px;width:2px;height:29px;background:#e3e5ea"></div><div class="abs td op" style="left:3143px;top:1592px">禁用</div><div class="abs" style="left:3222px;top:1601px;width:2px;height:29px;background:#e3e5ea"></div><div class="abs td op" style="left:3239px;top:1592px">编辑</div><div class="abs" style="left:3318px;top:1601px;width:2px;height:29px;background:#e3e5ea"></div><div class="abs td op" style="left:3335px;top:1592px">设备解绑</div><div class="abs" style="left:3478px;top:1601px;width:2px;height:29px;background:#e3e5ea"></div><div class="abs td op" style="left:3495px;top:1592px">账户清零</div><div class="abs" style="left:3638px;top:1601px;width:2px;height:29px;background:#e3e5ea"></div><div class="abs td op" style="left:3655px;top:1592px">删除</div>
<div class="abs pbox" style="left:2500px;top:1728px;width:160px;height:60px"></div><div class="abs t28" style="left:2515px;top:1737px;color:#30333b">20/页</div><svg class="abs" style="left:2618px;top:1746px" width="24" height="24" viewBox="0 0 24 24" ><path d="M5 9 L12 16 L19 9" stroke="#2b3245" stroke-width="2.4" fill="none"/></svg><div class="abs pbtn" style="left:2692px;top:1728px"></div><svg class="abs" style="left:2710px;top:1743px" width="24" height="30" viewBox="0 0 24 30" ><path d="M14 8 L8 15 L14 22" stroke="#b9b9b9" stroke-width="2" fill="none"/></svg><div class="abs pbtn" style="left:2768px;top:1728px">1</div><div class="abs pbtn" style="left:2902px;top:1728px">5</div><div class="abs pbtn" style="left:2978px;top:1728px">6</div><div class="abs pbtn" style="left:3054px;top:1728px;background:#4a7af8;border-color:#4a7af8;color:#fff">7</div><div class="abs pbtn" style="left:3130px;top:1728px">8</div><div class="abs pbtn" style="left:3206px;top:1728px">9</div><div class="abs pbtn" style="left:3340px;top:1728px">50</div><div class="abs pbtn" style="left:3416px;top:1728px"></div><svg class="abs" style="left:3434px;top:1743px" width="24" height="30" viewBox="0 0 24 30" ><path d="M9 8 L15 15 L9 22" stroke="#b9b9b9" stroke-width="2" fill="none"/></svg><svg class="abs" style="left:2850px;top:1750px" width="40" height="20" viewBox="0 0 40 20" ><g fill="#bdbdbd"><circle cx="4" cy="10" r="2"/><circle cx="19" cy="10" r="2"/><circle cx="34" cy="10" r="2"/></g></svg><svg class="abs" style="left:3288px;top:1750px" width="40" height="20" viewBox="0 0 40 20" ><g fill="#bdbdbd"><circle cx="4" cy="10" r="2"/><circle cx="19" cy="10" r="2"/><circle cx="34" cy="10" r="2"/></g></svg><div class="abs t28" style="left:3524px;top:1737px;color:#30333b">跳转至</div><div class="abs pbox" style="left:3625px;top:1728px;width:119px;height:60px"></div><div class="abs t32" style="left:3620px;top:1734px;width:119px;text-align:center;color:#30333b">7</div>
<script>(function(){var w=window.innerWidth;if(w&&Math.abs(w-3840)>2){document.documentElement.style.zoom=w/3840;}})();</script>
</body></html>
